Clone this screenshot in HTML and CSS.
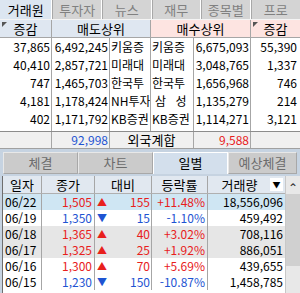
FILE: index.html
```html
<!DOCTYPE html>
<html lang="ko">
<head>
    <meta charset="UTF-8">
    <title>거래원 / 일별</title>
    <link rel="stylesheet" href="styles.css">
</head>
<body>
    <div class="top">
        <div class="tabs">
            <div class="tab on">거래원</div>
            <div class="tab">투자자</div>
            <div class="tab">뉴스</div>
            <div class="tab">재무</div>
            <div class="tab">종목별</div>
            <div class="tab">프로</div>
        </div>

        <div class="brk head">
            <div class="sell mark">증감</div>
            <div class="sell span2">매도상위</div>
            <div class="buy span2">매수상위</div>
            <div class="buy mark last">증감</div>
        </div>

        <div class="brk">
            <div class="num">37,865</div><div class="num">6,492,245</div><div class="name">키움증</div>
            <div class="name">키움증</div><div class="num">6,675,093</div><div class="num last">55,390</div>
        </div>
        <div class="brk">
            <div class="num">40,410</div><div class="num">2,857,721</div><div class="name">미래대</div>
            <div class="name">미래대</div><div class="num">3,048,765</div><div class="num last">1,337</div>
        </div>
        <div class="brk">
            <div class="num">747</div><div class="num">1,465,703</div><div class="name">한국투</div>
            <div class="name">한국투</div><div class="num">1,656,968</div><div class="num last">746</div>
        </div>
        <div class="brk">
            <div class="num">4,181</div><div class="num">1,178,424</div><div class="name">NH투자</div>
            <div class="name wide">삼 성</div><div class="num">1,135,279</div><div class="num last">214</div>
        </div>
        <div class="brk">
            <div class="num">402</div><div class="num">1,171,792</div><div class="name">KB증권</div>
            <div class="name">KB증권</div><div class="num">1,114,271</div><div class="num last">3,121</div>
        </div>
        <div class="brk spacer">
            <div></div><div></div><div></div><div></div><div></div><div class="last"></div>
        </div>

        <div class="brk total">
            <div></div>
            <div class="num blue">92,998</div>
            <div class="span2 center">외국계합</div>
            <div class="num red">9,588</div>
            <div class="last"></div>
        </div>
    </div>

    <div class="bottom">
        <div class="tabs2">
            <div class="tab2">체결</div>
            <div class="tab2">차트</div>
            <div class="tab2 on">일별</div>
            <div class="tab2">예상체결</div>
        </div>

        <div class="daily">
            <div class="table">
                <div class="day head">
                    <div>일자</div>
                    <div>종가</div>
                    <div>대비</div>
                    <div>등락률</div>
                    <div class="vol-head">거래량<span class="drop">&#9660;</span></div>
                </div>
                <div class="day sel">
                    <div class="date">06/22</div><div class="num red">1,505</div>
                    <div class="chg red"><span class="up">&#9650;</span>155</div>
                    <div class="num red">+11.48%</div><div class="num">18,556,096</div>
                </div>
                <div class="day">
                    <div class="date">06/19</div><div class="num blue">1,350</div>
                    <div class="chg blue"><span class="dn">&#9660;</span>15</div>
                    <div class="num blue">-1.10%</div><div class="num">459,492</div>
                </div>
                <div class="day grey">
                    <div class="date">06/18</div><div class="num red">1,365</div>
                    <div class="chg red"><span class="up">&#9650;</span>40</div>
                    <div class="num red">+3.02%</div><div class="num">708,116</div>
                </div>
                <div class="day grey">
                    <div class="date">06/17</div><div class="num red">1,325</div>
                    <div class="chg red"><span class="up">&#9650;</span>25</div>
                    <div class="num red">+1.92%</div><div class="num">886,051</div>
                </div>
                <div class="day">
                    <div class="date">06/16</div><div class="num red">1,300</div>
                    <div class="chg red"><span class="up">&#9650;</span>70</div>
                    <div class="num red">+5.69%</div><div class="num">439,655</div>
                </div>
                <div class="day">
                    <div class="date">06/15</div><div class="num blue">1,230</div>
                    <div class="chg blue"><span class="dn">&#9660;</span>150</div>
                    <div class="num blue">-10.87%</div><div class="num">1,458,785</div>
                </div>
            </div>
            <div class="scroll">
                <div class="arrow">&#8963;</div>
                <div class="thumb"></div>
            </div>
        </div>
    </div>
</body>
</html>
```

FILE: styles.css
```css
* {
    box-sizing: border-box;
}

body {
    margin: 0;
    width: 300px;
    height: 293px;
    overflow: hidden;
    font-family: "Noto Sans CJK KR", "Noto Sans", sans-serif;
    font-size: 12px;
    color: #000;
    background: #fff;
}

/* top: broker ranking */
.tabs {
    display: flex;
    height: 20px;
    background: #d4d4d4;
    border-bottom: 1px solid #f4f4f4;
}

.tab {
    width: 50px;
    line-height: 19px;
    text-align: center;
    color: #808080;
    font-size: 13px;
    border-right: 1px solid #fff;
    border-left: 1px solid #a8a8a8;
}

.tab:first-child {
    border-left: none;
    width: 53px;
}

.tab:last-child {
    border-right: none;
}

.tab.on {
    background: #dce6f1;
    color: #000;
}

.brk {
    display: grid;
    grid-template-columns: 52px 58px 41px 43px 57px 49px;
    height: 18px;
    line-height: 18px;
}

.brk > div {
    border-right: 1px solid #a6a6a6;
    white-space: nowrap;
}

.brk > div.last {
    border-right: none;
}

.brk .span2 {
    grid-column: span 2;
}

.brk.head {
    height: 18px;
    line-height: 17px;
    font-size: 13px;
    text-align: center;
    border-bottom: 1px solid #a6a6a6;
}

.sell {
    background: #dfe7f1;
}

.buy {
    background: #fde4e1;
}

.mark {
    position: relative;
}

.mark::before {
    content: "";
    position: absolute;
    left: 2px;
    top: 2px;
    border-top: 5px solid #555;
    border-right: 5px solid transparent;
}

.num {
    text-align: right;
    padding-right: 1px;
}

.brk .num.last {
    padding-right: 3px;
}

.name {
    padding-left: 1px;
    overflow: hidden;
}

.name.wide {
    padding-left: 4px;
    letter-spacing: 3px;
}

.brk.spacer {
    height: 3px;
}

.brk.total {
    height: 18px;
    line-height: 16px;
    background: #f0f0f0;
    border-top: 1px solid #8c8c8c;
    border-bottom: 1px solid #a0a0a0;
}

.center {
    text-align: center;
    font-size: 13px;
}

.red {
    color: #e8201c;
}

.blue {
    color: #1e54d2;
}

/* bottom: daily prices */
.bottom {
    background: #c6d3e1;
    padding: 3px 0 0 2px;
    height: 145px;
}

.tabs2 {
    display: flex;
    height: 22px;
    margin-left: 1px;
}

.tab2 {
    width: 75px;
    line-height: 20px;
    text-align: center;
    font-size: 13px;
    color: #6c6c6c;
    background: #cbcbcb;
    border: 1px solid #a8a8a8;
    border-top-color: #e8e8e8;
    border-left-color: #e8e8e8;
}

.tab2.on {
    background: #d3dfec;
    color: #000;
    border-color: #fff;
    border-bottom: none;
}

.tab2:last-child {
    width: 69px;
}

.daily {
    display: flex;
    margin-top: 2px;
    background: #fff;
    border-left: 1px solid #6e6e6e;
    height: 120px;
}

.table {
    width: 282px;
}

.day {
    display: grid;
    grid-template-columns: 39px 53px 57px 56px 77px;
    height: 16px;
    line-height: 16px;
}

.day > div {
    border-right: 1px solid #a6a6a6;
    white-space: nowrap;
}

.day > div:last-child {
    border-right: none;
}

.day.head {
    height: 18px;
    line-height: 17px;
    background: #e1e8f0;
    font-size: 13px;
    text-align: center;
    border-bottom: 1px solid #b0b0b0;
}

.vol-head {
    position: relative;
    padding-right: 14px;
}

.drop {
    position: absolute;
    right: 2px;
    top: 2px;
    width: 13px;
    height: 13px;
    background: #fff;
    font-size: 8px;
    line-height: 13px;
    text-align: center;
}

.day.sel {
    background: #cfe6f3;
}

.day.grey {
    background: #e6e6e6;
}

.date {
    padding-left: 2px;
}

.day .num {
    padding-right: 2px;
}

.chg {
    display: flex;
    justify-content: space-between;
    padding: 0 1px 0 2px;
}

.up,
.dn {
    font-size: 10px;
}

.up {
    color: #e8201c;
}

.dn {
    color: #1e54d2;
}

.scroll {
    width: 15px;
    background: #e8e8e8;
    border-left: 1px solid #c8c8c8;
}

.arrow {
    height: 18px;
    line-height: 22px;
    text-align: center;
    font-size: 12px;
    color: #333;
}

.thumb {
    height: 72px;
    background: #d0d0d0;
}
```
